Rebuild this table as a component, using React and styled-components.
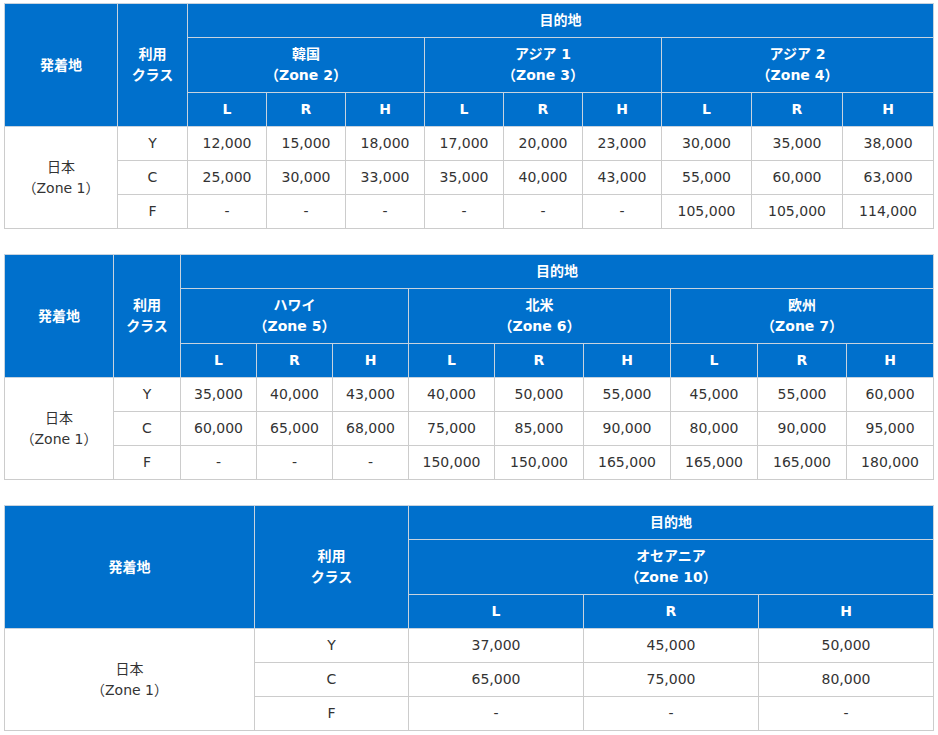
import styled, { createGlobalStyle } from 'styled-components'

const GlobalStyle = createGlobalStyle`
  body {
    margin: 0;
    background: #fff;
    font-family: "DejaVu Sans", "Noto Sans CJK JP", sans-serif;
  }
`;

const TABLES = [
  {
    widths: [113, 70, 79, 79, 79, 79, 79, 79, 90, 91, 91],
    zones: [
      { name: '韓国', zone: 'Zone 2' },
      { name: 'アジア 1', zone: 'Zone 3' },
      { name: 'アジア 2', zone: 'Zone 4' },
    ],
    rows: [
      ['Y', '12,000', '15,000', '18,000', '17,000', '20,000', '23,000', '30,000', '35,000', '38,000'],
      ['C', '25,000', '30,000', '33,000', '35,000', '40,000', '43,000', '55,000', '60,000', '63,000'],
      ['F', '-', '-', '-', '-', '-', '-', '105,000', '105,000', '114,000'],
    ],
  },
  {
    widths: [109, 67, 76, 76, 76, 86, 89, 87, 87, 89, 87],
    zones: [
      { name: 'ハワイ', zone: 'Zone 5' },
      { name: '北米', zone: 'Zone 6' },
      { name: '欧州', zone: 'Zone 7' },
    ],
    rows: [
      ['Y', '35,000', '40,000', '43,000', '40,000', '50,000', '55,000', '45,000', '55,000', '60,000'],
      ['C', '60,000', '65,000', '68,000', '75,000', '85,000', '90,000', '80,000', '90,000', '95,000'],
      ['F', '-', '-', '-', '150,000', '150,000', '165,000', '165,000', '165,000', '180,000'],
    ],
  },
  {
    widths: [250, 154, 175, 175, 175],
    zones: [{ name: 'オセアニア', zone: 'Zone 10' }],
    rows: [
      ['Y', '37,000', '45,000', '50,000'],
      ['C', '65,000', '75,000', '80,000'],
      ['F', '-', '-', '-'],
    ],
  },
];

const MileTable = ({ widths, zones, rows }) => {
  return (
    <TableStyle>
      <colgroup>
        {widths.map((w, i) => <col key={i} style={{ width: w }} />)}
      </colgroup>
      <thead>
        <tr className={'short'}>
          <HeadCell rowSpan={3}>発着地</HeadCell>
          <HeadCell rowSpan={3}>利用<br />クラス</HeadCell>
          <HeadCell colSpan={zones.length * 3}>目的地</HeadCell>
        </tr>
        <tr className={'tall'}>
          {zones.map(({ name, zone }) => (
            <HeadCell key={zone} colSpan={3}>{name}<br />（{zone}）</HeadCell>
          ))}
        </tr>
        <tr className={'short'}>
          {zones.map(({ zone }) => ['L', 'R', 'H'].map((s) => (
            <HeadCell key={zone + s}>{s}</HeadCell>
          )))}
        </tr>
      </thead>
      <tbody>
        {rows.map((row, index) => (
          <tr className={'short'} key={row[0]}>
            {index === 0 && <Cell rowSpan={3}>日本<br />（Zone 1）</Cell>}
            {row.map((value, i) => <Cell key={i}>{value}</Cell>)}
          </tr>
        ))}
      </tbody>
    </TableStyle>
  );
};

const App = () => {
  return (
    <Page>
      <GlobalStyle />
      {TABLES.map((table, index) => <MileTable key={index} {...table} />)}
    </Page>
  );
};

const Page = styled.div`
  display: flex;
  flex-direction: column;
  row-gap: 25px;
  padding: 3px 4px;
`;

const TableStyle = styled.table`
  width: 929px;
  table-layout: fixed;
  border-collapse: collapse;
  font-size: 14px;
  line-height: 21px;

  & tr.short {
    height: 34px;
  }

  & tr.tall {
    height: 55px;
  }
`;

const HeadCell = styled.th`
  background: #0070cc;
  color: #fff;
  font-weight: bold;
  text-align: center;
  vertical-align: middle;
  padding: 0 4px;
  border: 1px solid #c7d3df;
`;

const Cell = styled.td`
  background: #fff;
  color: #333;
  text-align: center;
  vertical-align: middle;
  padding: 0 4px;
  border: 1px solid #ccc;
`;

export default App;
